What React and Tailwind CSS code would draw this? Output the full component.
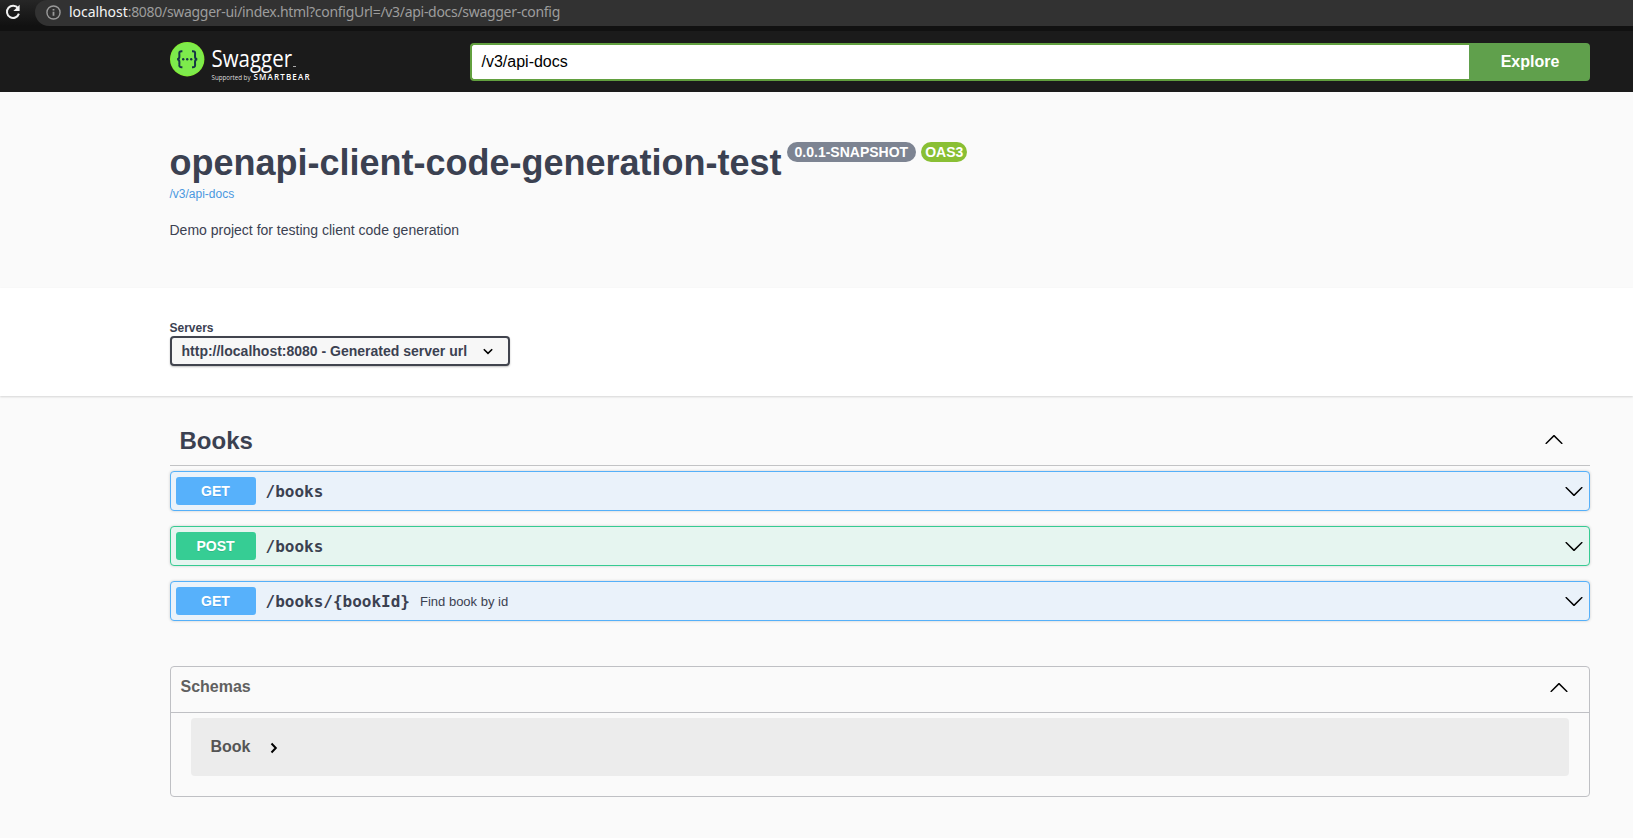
const chevronDown = 'M17.418 6.109c.272-.268.709-.268.979 0s.271.701 0 .969l-7.908 7.83c-.27.268-.707.268-.979 0l-7.908-7.83c-.27-.268-.27-.701 0-.969.271-.268.709-.268.979 0L10 13.25l7.418-7.141z';
const chevronUp = 'M 17.418 14.908 C 17.69 15.176 18.127 15.176 18.397 14.908 C 18.667 14.64 18.668 14.207 18.397 13.939 L 10.489 6.109 C 10.219 5.841 9.782 5.841 9.51 6.109 L 1.602 13.939 C 1.332 14.207 1.332 14.64 1.602 14.908 C 1.873 15.176 2.311 15.176 2.581 14.908 L 10 7.767 L 17.418 14.908 Z';

function Icon({ d, className = 'size-5' }) {
  return (
    <svg viewBox="0 0 20 20" className={`shrink-0 ${className}`} fill="#000" aria-hidden="true">
      <path d={d} />
    </svg>
  );
}

function BrowserBar() {
  return (
    <div className="flex h-[31px] shrink-0 items-start border-b-[5px] border-[#111111] bg-[#1b1b1b] bg-linear-to-b from-[#262626] to-[#111111]">
      <div className="flex h-6 w-[35px] shrink-0 items-center pl-[5px]">
        <svg viewBox="0 0 16 16" className="size-4" fill="none" stroke="#f1f1f1" strokeWidth="2" aria-hidden="true">
          <path d="M13 4.2A6.1 6.1 0 1 0 13.9 9.6" />
          <path d="M14.6 0.8V7H8.4Z" fill="#f1f1f1" stroke="none" />
        </svg>
      </div>
      <div className="flex h-[26px] flex-1 items-start rounded-bl-[14px] rounded-tl-[12px] bg-[#323232] pl-[10.5px]">
        <svg viewBox="0 0 16 16" className="mt-[5px] size-[15px] shrink-0" fill="none" stroke="#9a9a9a" strokeWidth="1.5" aria-hidden="true">
          <circle cx="8" cy="8" r="7" />
          <path d="M8 7.2v4.3M8 4.2v1.7" strokeWidth="1.9" />
        </svg>
        <div className="ml-[8.5px] font-['Noto_Sans',sans-serif] text-sm leading-6 tracking-[-0.3px] whitespace-nowrap text-[#9d9d9d]">
          <span className="tracking-[-0.05px] text-[#f4f4f4]">localhost</span>:8080/swagger-ui/index.html?configUrl=/v3/api-docs/swagger-config
        </div>
      </div>
    </div>
  );
}

function Logo() {
  return (
    <svg className="h-10 w-[150px] shrink-0" viewBox="0 0 150 40" aria-label="Swagger">
      <circle cx="17.2" cy="17.2" r="17.2" fill="#85ea2d" />
      <circle cx="17.2" cy="17.2" r="16.4" fill="#7deb4c" />
      <g fill="none" stroke="#173647" strokeWidth="2">
        <path d="M12.4 9.2h-.8c-1.7 0-2.4.8-2.3 2.3l.1 2.6c.1 1.9-.5 2.9-2.2 3.1 1.7.2 2.3 1.2 2.2 3.1l-.1 2.6c-.1 1.5.6 2.3 2.3 2.3h.8" />
        <path d="M22 9.2h.8c1.7 0 2.4.8 2.3 2.3l-.1 2.6c-.1 1.9.5 2.9 2.2 3.1-1.7.2-2.3 1.2-2.2 3.1l.1 2.6c.1 1.5-.6 2.3-2.3 2.3h-.8" />
      </g>
      <g fill="#173647">
        <circle cx="13.2" cy="17.2" r="1.2" />
        <circle cx="17.2" cy="17.2" r="1.2" />
        <circle cx="21.2" cy="17.2" r="1.2" />
      </g>
      <g fill="#fff" fontFamily="'Open Sans', sans-serif">
        <text x="41.5" y="25" fontSize="23" textLength="80.5" lengthAdjust="spacingAndGlyphs">Swagger</text>
        <path d="M123 24.500h3" stroke="#aaa" strokeWidth="1" />
        <text x="41.5" y="38.2" fontSize="6.3" textLength="39" lengthAdjust="spacingAndGlyphs" fill="#ddd">Supported by</text>
        <text x="83.5" y="38.2" fontSize="8" fontWeight="600" textLength="56" fill="#fff">SMARTBEAR</text>
      </g>
    </svg>
  );
}

function TopBar() {
  return (
    <header className="flex h-[61px] shrink-0 items-start bg-[#1b1b1b] pl-[169.5px] pr-[43.5px]">
      <div className="w-[300px] shrink-0 pt-[11px]"><Logo /></div>
      <form className="mt-3 flex h-[38px] flex-1">
        <div className="flex h-full flex-1 items-center rounded-l border-2 border-r-0 border-[#62a03f] bg-white px-2.5 text-base text-black">/v3/api-docs</div>
        <button type="button" className="h-full w-[121px] rounded-r bg-[#60a04c] pl-0.5 text-base font-bold text-white">Explore</button>
      </form>
    </header>
  );
}

const methodStyles = {
  GET: { row: 'border-[#55b0f9] bg-[#eaf2fa]', badge: 'bg-[#57b1fb]' },
  POST: { row: 'border-[#36cb92] bg-[#e6f5f0]', badge: 'bg-[#36cd94]' },
};

function Operation({ method, path, summary }) {
  const style = methodStyles[method];
  return (
    <div className={`flex h-10 items-center rounded border pl-[5px] pr-[5px] shadow-[0_0_3px_rgba(0,0,0,0.19)] ${style.row}`}>
      <span className={`flex h-7 w-20 items-center justify-center rounded-[3px] text-sm font-bold text-white [text-shadow:0_1px_0_rgba(0,0,0,0.1)] ${style.badge}`}>{method}</span>
      <span className="pl-2.5 pt-0.5 font-['DejaVu_Sans_Mono',monospace] text-base leading-5 font-bold">{path}</span>
      {summary && <span className="pl-2.5 pt-0.5 text-[13px]">{summary}</span>}
      <Icon d={chevronDown} className="ml-auto size-5" />
    </div>
  );
}

export default function App() {
  return (
    <div className="flex h-[838px] flex-col overflow-hidden bg-[#fafafa] font-['Liberation_Sans',Arial,sans-serif] text-[#3b4151]">
      <BrowserBar />
      <TopBar />
      <section className="h-[196px] shrink-0 pl-[169.5px] pt-[50px]">
        <div className="flex items-start">
          <h1 className="text-4xl leading-[41px] font-bold">openapi-client-code-generation-test</h1>
          <span className="ml-[5px] flex h-5 items-center rounded-full bg-[#7d8492] px-2 text-sm font-bold text-white">0.0.1-SNAPSHOT</span>
          <span className="ml-[5px] flex h-5 items-center rounded-full bg-[#89bf34] px-1 text-sm font-bold text-white">OAS3</span>
        </div>
        <a className="mt-1 block text-xs leading-[14px] text-[#4a98df]">/v3/api-docs</a>
        <p className="mt-[21px] text-sm leading-4">Demo project for testing client code generation</p>
      </section>
      <section className="z-10 h-[108px] shrink-0 bg-white pl-[169.5px] pt-8 shadow-[0_1px_2px_rgba(0,0,0,0.15)]">
        <p className="text-xs leading-4 font-bold">Servers</p>
        <div className="flex h-[30px] w-[340px] items-center justify-between rounded border-2 border-[#41444e] bg-[#f7f7f7] pl-2.5 pr-3 text-sm font-bold shadow-[0_1px_2px_rgba(0,0,0,0.25)]">
          <span>http://localhost:8080 - Generated server url</span>
          <svg viewBox="0 0 16 16" className="size-4" fill="none" stroke="#000" strokeWidth="1.6" aria-hidden="true">
            <path d="M3.8 6.2 8 10.3l4.2-4.1" />
          </svg>
        </div>
      </section>
      <main className="pl-[169.5px] pr-[43.5px] pt-5">
        <div className="mb-[5px] flex h-[50px] items-center justify-between border-b border-[#c2c3c5] pl-2.5 pr-[26px]">
          <h2 className="text-2xl font-bold">Books</h2>
          <Icon d={chevronUp} className="mb-[3px] size-5" />
        </div>
        <div className="flex flex-col gap-[15px]">
          <Operation method="GET" path="/books" />
          <Operation method="POST" path="/books" />
          <Operation method="GET" path="/books/{bookId}" summary="Find book by id" />
        </div>
        <section className="mt-[45px] h-[131px] rounded border border-[#bfc0c4]">
          <div className="flex h-[46px] items-center justify-between border-b border-[#bfc0c4] pl-2.5 pr-5">
            <h3 className="pb-[5px] text-base font-bold text-[#606060]">Schemas</h3>
            <Icon d={chevronUp} className="mb-[5px] size-5" />
          </div>
          <div className="mx-5 mt-[5px] flex h-[58px] items-center rounded bg-[#ececec] pl-5">
            <span className="text-base font-bold text-[#555555]">Book</span>
            <svg viewBox="0 0 16 16" className="ml-[15px] mt-0.5 size-4" fill="none" stroke="#000" strokeWidth="2" aria-hidden="true">
              <path d="m5.5 3.5 4.3 4.5-4.3 4.5" />
            </svg>
          </div>
        </section>
      </main>
    </div>
  );
}
